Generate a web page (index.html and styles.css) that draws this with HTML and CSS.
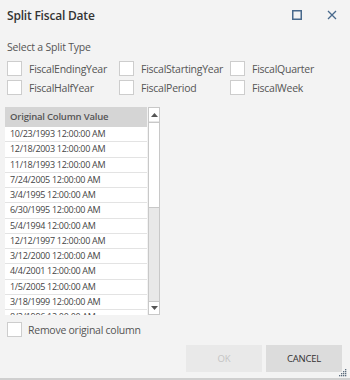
FILE: index.html
```html
<!DOCTYPE html>
<html>
<head>
<meta charset="utf-8">
<link rel="stylesheet" href="styles.css">
</head>
<body>
<div class="dialog">
  <div class="titlebar">
    <div class="title">Split Fiscal Date</div>
    <div class="win-icons">
      <svg class="ico" width="10" height="10" viewBox="0 0 10 10"><rect x="0.75" y="0.75" width="8.5" height="8.5" fill="none" stroke="#48698c" stroke-width="1.5"/></svg>
      <svg class="ico close" width="10" height="10" viewBox="0 0 10 10"><path d="M1 1L9 9M9 1L1 9" stroke="#48698c" stroke-width="1.3" fill="none"/></svg>
    </div>
  </div>
  <div class="section-label">Select a Split Type</div>
  <div class="types">
    <label class="opt"><span class="box"></span>FiscalEndingYear</label>
    <label class="opt"><span class="box"></span>FiscalStartingYear</label>
    <label class="opt"><span class="box"></span>FiscalQuarter</label>
    <label class="opt"><span class="box"></span>FiscalHalfYear</label>
    <label class="opt"><span class="box"></span>FiscalPeriod</label>
    <label class="opt"><span class="box"></span>FiscalWeek</label>
  </div>
  <div class="grid">
    <div class="list">
      <div class="head">Original Column Value</div>
      <div class="rows">
        <div class="row">10/23/1993 12:00:00 AM</div>
        <div class="row">12/18/2003 12:00:00 AM</div>
        <div class="row">11/18/1993 12:00:00 AM</div>
        <div class="row">7/24/2005 12:00:00 AM</div>
        <div class="row">3/4/1995 12:00:00 AM</div>
        <div class="row">6/30/1995 12:00:00 AM</div>
        <div class="row">5/4/1994 12:00:00 AM</div>
        <div class="row">12/12/1997 12:00:00 AM</div>
        <div class="row">3/12/2000 12:00:00 AM</div>
        <div class="row">4/4/2001 12:00:00 AM</div>
        <div class="row">1/5/2005 12:00:00 AM</div>
        <div class="row">3/18/1999 12:00:00 AM</div>
        <div class="row">8/2/1996 12:00:00 AM</div>
      </div>
    </div>
    <div class="scrollbar">
      <div class="sb-btn"><svg width="7" height="4" viewBox="0 0 7 4"><path d="M0 4L3.5 0L7 4Z" fill="#555"/></svg></div>
      <div class="sb-thumb"></div>
      <div class="sb-track"></div>
      <div class="sb-btn"><svg width="7" height="4" viewBox="0 0 7 4"><path d="M0 0L3.5 4L7 0Z" fill="#555"/></svg></div>
    </div>
  </div>
  <label class="opt remove"><span class="box"></span>Remove original column</label>
  <div class="buttons">
    <button class="btn ok" disabled>OK</button>
    <button class="btn cancel">CANCEL</button>
  </div>
  <svg class="grip" width="8" height="8" viewBox="0 0 8 8">
    <rect x="6" y="0" width="1.3" height="1.3" fill="#5a6b7c"/>
    <rect x="4" y="2" width="1.3" height="1.3" fill="#5a6b7c"/>
    <rect x="6" y="2" width="1.3" height="1.3" fill="#5a6b7c"/>
    <rect x="2" y="4" width="1.3" height="1.3" fill="#5a6b7c"/>
    <rect x="4" y="4" width="1.3" height="1.3" fill="#5a6b7c"/>
    <rect x="6" y="4" width="1.3" height="1.3" fill="#5a6b7c"/>
    <rect x="0" y="6" width="1.3" height="1.3" fill="#5a6b7c"/>
    <rect x="2" y="6" width="1.3" height="1.3" fill="#5a6b7c"/>
    <rect x="4" y="6" width="1.3" height="1.3" fill="#5a6b7c"/>
    <rect x="6" y="6" width="1.3" height="1.3" fill="#5a6b7c"/>
  </svg>
</div>
</body>
</html>
```

FILE: styles.css
```css
* { box-sizing: border-box; }
html, body { margin: 0; padding: 0; }
body {
  width: 350px;
  height: 380px;
  background: #f3f3f3;
  font-family: "Open Sans", "Noto Sans", sans-serif;
  color: #444;
  overflow: hidden;
}
.dialog {
  position: relative;
  width: 350px;
  height: 380px;
  border-bottom: 2px solid #cfcfcf;
  padding: 0 8px 0 7px;
}
.titlebar {
  height: 30px;
  display: flex;
  align-items: center;
  justify-content: space-between;
}
.title {
  font-size: 12px;
  font-weight: 600;
  color: #333;
  letter-spacing: -0.2px;
}
.win-icons {
  display: flex;
  align-items: center;
  gap: 25px;
  padding-right: 5px;
}
.ico { display: block; }
.section-label {
  margin-top: 10px;
  font-size: 10.5px;
  line-height: 14px;
  color: #555;
  letter-spacing: -0.2px;
}
.types {
  margin-top: 7px;
  display: grid;
  grid-template-columns: 112px 111px auto;
  row-gap: 4px;
}
.opt {
  display: flex;
  align-items: center;
  height: 15px;
  font-size: 10.5px;
  color: #555;
  letter-spacing: -0.25px;
}
.box {
  width: 15px;
  height: 15px;
  background: #fff;
  border: 1px solid #cdcdcd;
  margin-right: 7px;
  flex: none;
}
.grid {
  margin-top: 12px;
  margin-left: -2px;
  height: 208px;
  display: flex;
  gap: 1px;
}
.list {
  width: 142px;
  background: #f0f0f0;
  overflow: hidden;
}
.head {
  height: 20px;
  background: #d5d5d5;
  font-size: 9.5px;
  font-weight: 600;
  color: #555;
  line-height: 20px;
  padding-left: 5px;
  letter-spacing: -0.2px;
}
.rows { display: flex; flex-direction: column; }
.row {
  height: 15.27px;
  border-bottom: 1px solid #e3e3e3;
  background: #fff;
  font-size: 9px;
  line-height: 14px;
  padding-left: 5px;
  color: #444;
  letter-spacing: -0.3px;
  white-space: nowrap;
  flex: none;
}
.scrollbar {
  width: 12px;
  border: 1px solid #c8c8c8;
  display: flex;
  flex-direction: column;
  background: #e8e8e8;
}
.sb-btn {
  height: 13px;
  background: #fff;
  display: flex;
  align-items: center;
  justify-content: center;
  flex: none;
}
.sb-thumb {
  height: 86px;
  background: #fff;
  border: 1px solid #c8c8c8;
  margin: 1px -1px 0 -1px;
  flex: none;
}
.sb-track { flex: 1; }
.sb-btn:last-child { border-top: 1px solid #c8c8c8; }
.remove {
  margin-top: 7px;
  font-size: 10.5px;
}
.remove .box { margin-right: 6px; }
.buttons {
  margin-top: 8px;
  display: flex;
  justify-content: flex-end;
  gap: 4px;
}
.btn {
  width: 76px;
  height: 27px;
  border: none;
  font-family: "Open Sans", "Noto Sans", sans-serif;
  font-size: 9.5px;
  letter-spacing: -0.2px;
  padding: 0;
}
.ok { background: #e9e9e9; color: #c4c4c4; }
.cancel { background: #dcdcdc; color: #333; }
.grip {
  position: absolute;
  right: 3px;
  bottom: 1px;
}
```
